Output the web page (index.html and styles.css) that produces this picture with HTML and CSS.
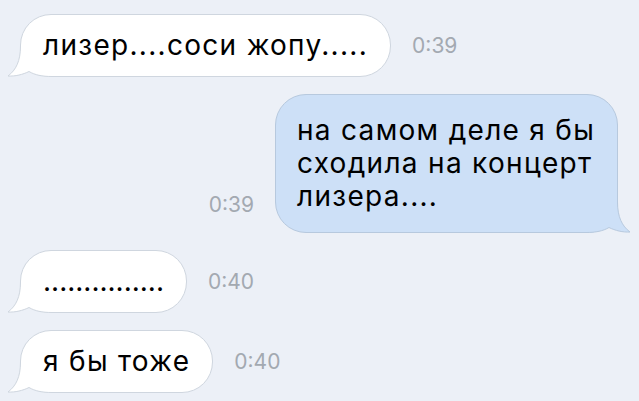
FILE: index.html
```html
<!DOCTYPE html>
<html>
<head>
    <meta charset="utf-8">
    <title>Диалог</title>
    <link rel="stylesheet" href="styles.css">
</head>
<body>
    <div class="chat">
        <div class="row in">
            <div class="bubble">
                <svg class="tail" width="48" height="34" viewBox="0 0 48 34"><path class="tail-fill" d="M14.5 3 C14.5 18 10 27 2 33 C9 33.5 17 31.5 23 28.5 C29 32 36 33.5 46 33.5 L46 3 Z"/><path class="tail-line" d="M14.5 3 C14.5 18 10 27 2 33 C9 33.5 17 31.5 23 28.5 C29 32 36 33.5 46 33.5"/></svg>
                <span class="text">лизер....соси жопу.....</span>
            </div>
            <span class="time">0:39</span>
        </div>

        <div class="row out">
            <span class="time">0:39</span>
            <div class="bubble">
                <svg class="tail" width="48" height="34" viewBox="0 0 48 34"><path class="tail-fill" d="M14.5 3 C14.5 18 10 27 2 33 C9 33.5 17 31.5 23 28.5 C29 32 36 33.5 46 33.5 L46 3 Z"/><path class="tail-line" d="M14.5 3 C14.5 18 10 27 2 33 C9 33.5 17 31.5 23 28.5 C29 32 36 33.5 46 33.5"/></svg>
                <span class="text">на самом деле я бы сходила на концерт лизера....</span>
            </div>
        </div>

        <div class="row in">
            <div class="bubble">
                <svg class="tail" width="48" height="34" viewBox="0 0 48 34"><path class="tail-fill" d="M14.5 3 C14.5 18 10 27 2 33 C9 33.5 17 31.5 23 28.5 C29 32 36 33.5 46 33.5 L46 3 Z"/><path class="tail-line" d="M14.5 3 C14.5 18 10 27 2 33 C9 33.5 17 31.5 23 28.5 C29 32 36 33.5 46 33.5"/></svg>
                <span class="text dots">...............</span>
            </div>
            <span class="time">0:40</span>
        </div>

        <div class="row in">
            <div class="bubble">
                <svg class="tail" width="48" height="34" viewBox="0 0 48 34"><path class="tail-fill" d="M14.5 3 C14.5 18 10 27 2 33 C9 33.5 17 31.5 23 28.5 C29 32 36 33.5 46 33.5 L46 3 Z"/><path class="tail-line" d="M14.5 3 C14.5 18 10 27 2 33 C9 33.5 17 31.5 23 28.5 C29 32 36 33.5 46 33.5"/></svg>
                <span class="text">я бы тоже</span>
            </div>
            <span class="time">0:40</span>
        </div>
    </div>
</body>
</html>
```

FILE: styles.css
```css
body { margin: 0; background: #ecf0f7; font-family: Inter, "Noto Sans", sans-serif; color: #000; }
.chat { display: flex; flex-direction: column; gap: 17px; padding: 14px 21px 0 20px; }
.row { display: flex; align-items: flex-end; gap: 21px; }
.row.out { justify-content: flex-end; }
.bubble { position: relative; background: #fff; border: 1px solid #cfd6df; border-radius: 31px; padding: 14px 22px; font-size: 28px; line-height: 33px; letter-spacing: 1.3px; }
.text { position: relative; }
.dots { letter-spacing: 0; }
.out .bubble { background: #cde0f7; border-color: #b7c9de; max-width: 302px; padding: 19px 18px 19px 21px; }
.tail { position: absolute; left: -15px; bottom: -1px; }
.tail-fill { fill: #fff; }
.tail-line { fill: none; stroke: #cfd6df; stroke-width: 1; }
.out .tail { left: auto; right: -15px; transform: scaleX(-1); }
.out .tail-fill { fill: #cde0f7; }
.out .tail-line { stroke: #b7c9de; }
.time { font-size: 21px; line-height: 24px; color: #a3a9b1; margin-bottom: 19px; }
.out .time { margin-bottom: 16px; }
```
